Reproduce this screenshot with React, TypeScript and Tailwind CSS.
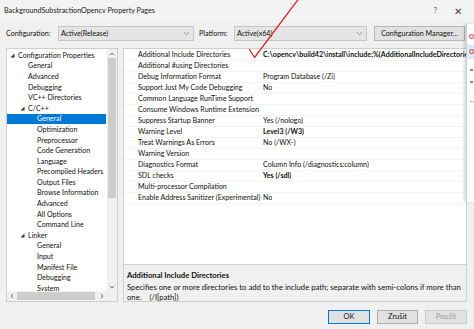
import React from "react";

type Node = { label: string; level: number; arrow?: boolean; selected?: boolean };

const tree: Node[] = [
  { label: "Configuration Properties", level: 0, arrow: true },
  { label: "General", level: 1 },
  { label: "Advanced", level: 1 },
  { label: "Debugging", level: 1 },
  { label: "VC++ Directories", level: 1 },
  { label: "C/C++", level: 1, arrow: true },
  { label: "General", level: 2, selected: true },
  { label: "Optimization", level: 2 },
  { label: "Preprocessor", level: 2 },
  { label: "Code Generation", level: 2 },
  { label: "Language", level: 2 },
  { label: "Precompiled Headers", level: 2 },
  { label: "Output Files", level: 2 },
  { label: "Browse Information", level: 2 },
  { label: "Advanced", level: 2 },
  { label: "All Options", level: 2 },
  { label: "Command Line", level: 2 },
  { label: "Linker", level: 1, arrow: true },
  { label: "General", level: 2 },
  { label: "Input", level: 2 },
  { label: "Manifest File", level: 2 },
  { label: "Debugging", level: 2 },
  { label: "System", level: 2 },
];

const props: { name: string; value: string; bold?: boolean }[] = [
  { name: "Additional Include Directories", value: "C:\\opencv\\build42\\install\\include;%(AdditionalIncludeDirectories)", bold: true },
  { name: "Additional #using Directories", value: "" },
  { name: "Debug Information Format", value: "Program Database (/Zi)" },
  { name: "Support Just My Code Debugging", value: "No" },
  { name: "Common Language RunTime Support", value: "" },
  { name: "Consume Windows Runtime Extension", value: "" },
  { name: "Suppress Startup Banner", value: "Yes (/nologo)" },
  { name: "Warning Level", value: "Level3 (/W3)", bold: true },
  { name: "Treat Warnings As Errors", value: "No (/WX-)" },
  { name: "Warning Version", value: "" },
  { name: "Diagnostics Format", value: "Column Info (/diagnostics:column)" },
  { name: "SDL checks", value: "Yes (/sdl)", bold: true },
  { name: "Multi-processor Compilation", value: "" },
  { name: "Enable Address Sanitizer (Experimental)", value: "No" },
];

function Chevron() {
  return (
    <svg width="7" height="5" viewBox="0 0 7 5" className="shrink-0">
      <path d="M1 1.2 L3.5 3.6 L6 1.2" fill="none" stroke="#8a8a8a" strokeWidth="0.9" />
    </svg>
  );
}

export default function App() {
  return (
    <div className="relative w-[474px] h-[329px] overflow-hidden bg-[#f0f0f0] text-[#111] font-['Lato',sans-serif] text-[7.1px] leading-none">
      {/* title bar */}
      <div className="flex h-[22px] items-center pl-[4px] pr-[12px] bg-[#f3f3f3]">
        <span className="text-[7.2px] text-[#222]">BackgroundSubstractionOpencv Property Pages</span>
        <span className="ml-auto text-[7.5px] text-[#555]">?</span>
        <span className="ml-[17px] text-[10px] text-[#444]">✕</span>
      </div>

      {/* configuration row */}
      <div className="flex h-[15px] items-center mt-[4px]">
        <span className="ml-[6px] w-[52px]">Configuration:</span>
        <div className="flex h-[15px] w-[136px] items-center justify-between border border-[#c6c6c6] bg-[#e4e4e4] pl-[2px] pr-[3px]">
          <span>Active(Release)</span>
          <Chevron />
        </div>
        <span className="ml-[5px] w-[35px]">Platform:</span>
        <div className="flex h-[15px] w-[133px] items-center justify-between border border-[#c6c6c6] bg-[#e4e4e4] pl-[2px] pr-[3px]">
          <span>Active(x64)</span>
          <Chevron />
        </div>
        <div className="ml-[7px] flex h-[15px] w-[91px] items-center justify-center border border-[#b8b8b8] bg-[#e1e1e1]">
          Configuration Manager...
        </div>
      </div>

      {/* main area */}
      <div className="mt-[7px] flex">
        {/* tree */}
        <div className="ml-[6px] flex h-[254px] w-[112px] flex-col border border-[#cfcfcf] bg-white">
          <div className="flex min-h-0 flex-1">
            <div className="flex-1 overflow-hidden pt-[1px]">
              {tree.map((n, i) => (
                <div
                  key={i}
                  className={
                    "flex h-[10.6px] items-center whitespace-nowrap " +
                    (n.selected ? "bg-[#0078d7] text-white mr-[1px]" : "")
                  }
                  style={{ paddingLeft: n.level === 0 ? 3 : n.level === 1 ? (n.arrow ? 13 : 21) : 30 }}
                >
                  {n.arrow && (
                    <svg width="5" height="5" viewBox="0 0 5 5" className="mr-[3px] shrink-0">
                      <path d="M4.5 0.5 L4.5 4.5 L0.5 4.5 Z" fill="#333" />
                    </svg>
                  )}
                  <span>{n.label}</span>
                </div>
              ))}
            </div>
            <div className="flex w-[10px] flex-col items-center bg-[#f0f0f0]">
              <div className="flex h-[9px] items-center">
                <svg width="6" height="4" viewBox="0 0 6 4">
                  <path d="M0.8 3.2 L3 1 L5.2 3.2" fill="none" stroke="#606060" strokeWidth="0.9" />
                </svg>
              </div>
              <div className="h-[140px] w-[8px] bg-[#cdcdcd]" />
              <div className="flex-1" />
              <div className="flex h-[9px] items-center">
                <svg width="6" height="4" viewBox="0 0 6 4">
                  <path d="M0.8 0.8 L3 3 L5.2 0.8" fill="none" stroke="#606060" strokeWidth="0.9" />
                </svg>
              </div>
            </div>
          </div>
          <div className="flex h-[10px] items-center bg-[#f0f0f0]">
            <div className="flex w-[10px] justify-center">
              <svg width="4" height="6" viewBox="0 0 4 6">
                <path d="M3.2 0.8 L1 3 L3.2 5.2" fill="none" stroke="#606060" strokeWidth="0.9" />
              </svg>
            </div>
            <div className="h-[8px] w-[78px] bg-[#cdcdcd]" />
            <div className="flex w-[14px] justify-center">
              <svg width="4" height="6" viewBox="0 0 4 6">
                <path d="M0.8 0.8 L3 3 L0.8 5.2" fill="none" stroke="#606060" strokeWidth="0.9" />
              </svg>
            </div>
            <div className="flex-1" />
          </div>
        </div>

        {/* right column */}
        <div className="ml-[5px] flex w-[344px] flex-col">
          <div className="h-[217px] border border-[#cfcfcf] bg-white pt-[1px]">
            {props.map((p, i) => (
              <div key={i} className="flex h-[11px] items-center border-b border-[#f4f4f4] whitespace-nowrap">
                <div className="w-[139px] shrink-0 overflow-hidden pl-[14px] pr-[1px]">{p.name}</div>
                <div className={"overflow-hidden " + (p.bold ? "font-bold" : "")}>{p.value}</div>
              </div>
            ))}
          </div>
          <div className="h-[37px] border border-t-0 border-[#cfcfcf] bg-[#f0f0f0] px-[3px] pt-[7px] text-[7.7px]">
            <div className="font-bold">Additional Include Directories</div>
            <div className="mt-[2px] leading-[10.5px]">
              Specifies one or more directories to add to the include path; separate with semi-colons if more than one.&nbsp;&nbsp;&nbsp;&nbsp;(/I[path])
            </div>
          </div>
        </div>
      </div>

      {/* buttons */}
      <div className="mt-[8px] flex justify-end gap-[7px] pr-[7px] text-[7.5px]">
        <div className="flex h-[14px] w-[42px] items-center justify-center border border-[#0078d7] bg-[#e1e1e1]">OK</div>
        <div className="flex h-[14px] w-[41px] items-center justify-center border border-[#adadad] bg-[#e1e1e1]">Zrušit</div>
        <div className="flex h-[14px] w-[42px] items-center justify-center border border-[#cccccc] bg-[#e1e1e1] text-[#a0a0a0]">Použít</div>
      </div>

      {/* overlapping window at right edge */}
      <div className="absolute left-[466px] top-[24px] h-[178px] w-[10px] border-l border-[#d0d0d0] bg-white shadow-[-2px_0_3px_rgba(0,0,0,0.15)]">
        <div className="mt-[10px] ml-[2px] h-[5px] w-[5px] rounded-full border border-[#d04040]" />
        <div className="mt-[6px] h-[14px] w-full bg-[#dbe8f7]">
          <div className="ml-[2px] pt-[4px]">
            <div className="h-[5px] w-[5px] rounded-full border border-[#d04040]" />
          </div>
        </div>
        <div className="mt-[10px] ml-[3px] h-[2px] w-[3px] bg-[#888]" />
        <div className="mt-[10px] ml-[3px] h-[2px] w-[3px] bg-[#888]" />
        <div className="mt-[18px] ml-[3px] h-[1px] w-[3px] bg-[#aaa]" />
      </div>

      {/* red hand-drawn check */}
      <svg className="pointer-events-none absolute left-0 top-0" width="474" height="329">
        <path d="M249.5 49.5 L254.5 57.5 L298.5 -1" fill="none" stroke="#e0262b" strokeWidth="1.3" strokeLinecap="round" strokeLinejoin="round" />
      </svg>
    </div>
  );
}
